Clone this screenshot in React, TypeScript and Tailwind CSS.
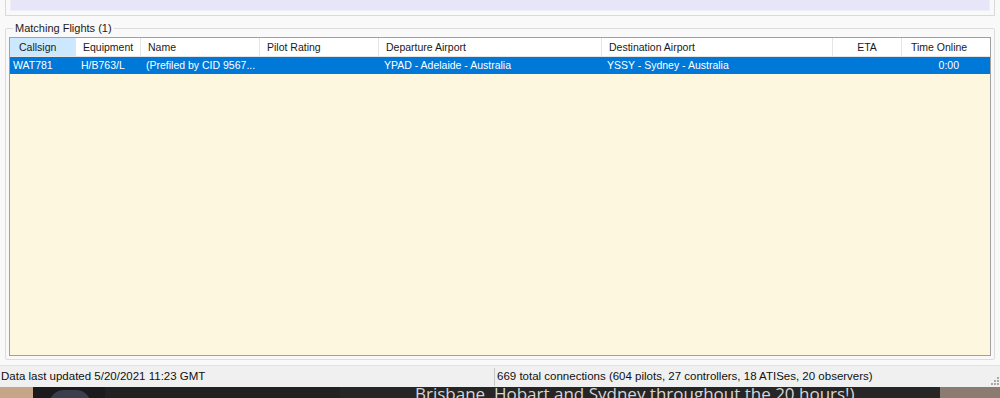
import React from 'react';

const columns = [
  { key: 'callsign', label: 'Callsign', width: 66, align: 'left' },
  { key: 'equipment', label: 'Equipment', width: 65, align: 'left' },
  { key: 'name', label: 'Name', width: 119, align: 'left' },
  { key: 'rating', label: 'Pilot Rating', width: 119, align: 'left' },
  { key: 'dep', label: 'Departure Airport', width: 223, align: 'left' },
  { key: 'dest', label: 'Destination Airport', width: 231, align: 'left' },
  { key: 'eta', label: 'ETA', width: 69, align: 'center' },
  { key: 'online', label: 'Time Online', width: 90, align: 'right' },
];

const rows = [
  {
    callsign: 'WAT781',
    equipment: 'H/B763/L',
    name: '(Prefiled by CID 9567...',
    rating: '',
    dep: 'YPAD - Adelaide - Australia',
    dest: 'YSSY - Sydney - Australia',
    eta: '',
    online: '0:00',
  },
];

export default function App() {
  return (
    <div className="w-[1000px] h-[398px] overflow-hidden bg-[#f9f9f9] flex flex-col text-[10.5px] text-[#1a1a1a] font-['Liberation_Sans',Arial,sans-serif]">
      {/* top panel remnant */}
      <div className="h-[16px] mx-[5px] border-x border-b border-[#dadada] px-[4px] pb-[4px]">
        <div className="h-full bg-[#e6e6f8] border border-t-0 border-[#eeeef8]" />
      </div>

      {/* Matching flights group */}
      <div className="relative mx-[5px] mt-[12px] h-[332px] border border-[#dcdcdc] rounded-[2px] px-[3px] pt-[8px] pb-[3px]">
        <div className="absolute left-[7px] top-[-7px] bg-[#f9f9f9] px-[2px] leading-[13px] text-[11px] text-[#1a1a1a]">
          Matching Flights (1)
        </div>
        <div className="h-full border border-[#a0a0a0] bg-[#fef7df] flex flex-col">
          {/* header */}
          <div className="flex h-[19px] bg-white border-b border-[#e5e5e5] shrink-0">
            {columns.map((c, i) => (
              <div
                key={c.key}
                style={{ width: c.width }}
                className={`shrink-0 h-full leading-[18px] whitespace-nowrap border-r border-[#e5e5e5] ${
                  i === 0 ? 'bg-[#cce8ff] border-[#99d1ff] pl-[9px]' : 'pl-[7px]'
                } ${c.align === 'center' ? 'text-center !pl-0' : ''} ${c.align === 'right' ? '!pl-[9px] border-r-0' : ''}`}
              >
                {c.label}
              </div>
            ))}
            <div className="flex-1" />
          </div>
          {/* rows */}
          {rows.map((r) => (
            <div key={r.callsign} className="flex h-[17px] bg-[#0078d7] text-white shrink-0">
              {columns.map((c, i) => (
                <div
                  key={c.key}
                  style={{ width: c.width }}
                  className={`shrink-0 leading-[17px] whitespace-nowrap overflow-hidden ${
                    i === 0 ? 'pl-[3px]' : 'pl-[5px]'
                  } ${c.align === 'right' ? 'text-right pr-[33px]' : ''}`}
                >
                  {(r as Record<string, string>)[c.key]}
                </div>
              ))}
              <div className="flex-1" />
            </div>
          ))}
        </div>
      </div>

      {/* status bar */}
      <div className="mt-[5px] h-[22px] bg-[#f0f0f0] border-t border-[#e3e3e3] flex items-center text-[11.5px] text-[#111]">
        <div className="w-[494px] pl-[1px] whitespace-nowrap">Data last updated 5/20/2021 11:23 GMT</div>
        <div className="h-[18px] border-l border-[#c8c8c8]" />
        <div className="flex-1 pl-[2px] whitespace-nowrap">
          669 total connections (604 pilots, 27 controllers, 18 ATISes, 20 observers)
        </div>
        <div className="w-[10px] h-full flex items-end justify-end pb-[2px] pr-[1px]">
          <svg width="8" height="8" viewBox="0 0 8 8">
            <rect x="6" y="0" width="2" height="2" fill="#a8a8a8" />
            <rect x="3" y="3" width="2" height="2" fill="#a8a8a8" />
            <rect x="6" y="3" width="2" height="2" fill="#a8a8a8" />
            <rect x="0" y="6" width="2" height="2" fill="#a8a8a8" />
            <rect x="3" y="6" width="2" height="2" fill="#a8a8a8" />
            <rect x="6" y="6" width="2" height="2" fill="#a8a8a8" />
          </svg>
        </div>
      </div>

      {/* background strip below the window */}
      <div className="flex-1 relative flex bg-[#1e1e1e] overflow-hidden">
        <div className="w-[33px] bg-[#c6a588]" />
        <div className="w-[72px] bg-[#1b1b1d] relative">
          <div className="absolute left-[16px] top-[3px] w-[42px] h-[30px] rounded-full bg-[#3b3e4c]" />
        </div>
        <div className="w-[235px] bg-[#212121]" />
        <div className="flex-1 bg-[#262626] relative">
          <div className="absolute left-[75px] top-[-3px] text-[17px] leading-[20px] text-[#d6d6d6] whitespace-nowrap font-['Open_Sans',sans-serif]">
            Brisbane, Hobart and Sydney throughout the 20 hours!)
          </div>
        </div>
        <div className="w-[60px] bg-[#8c7b70]" />
      </div>
    </div>
  );
}
